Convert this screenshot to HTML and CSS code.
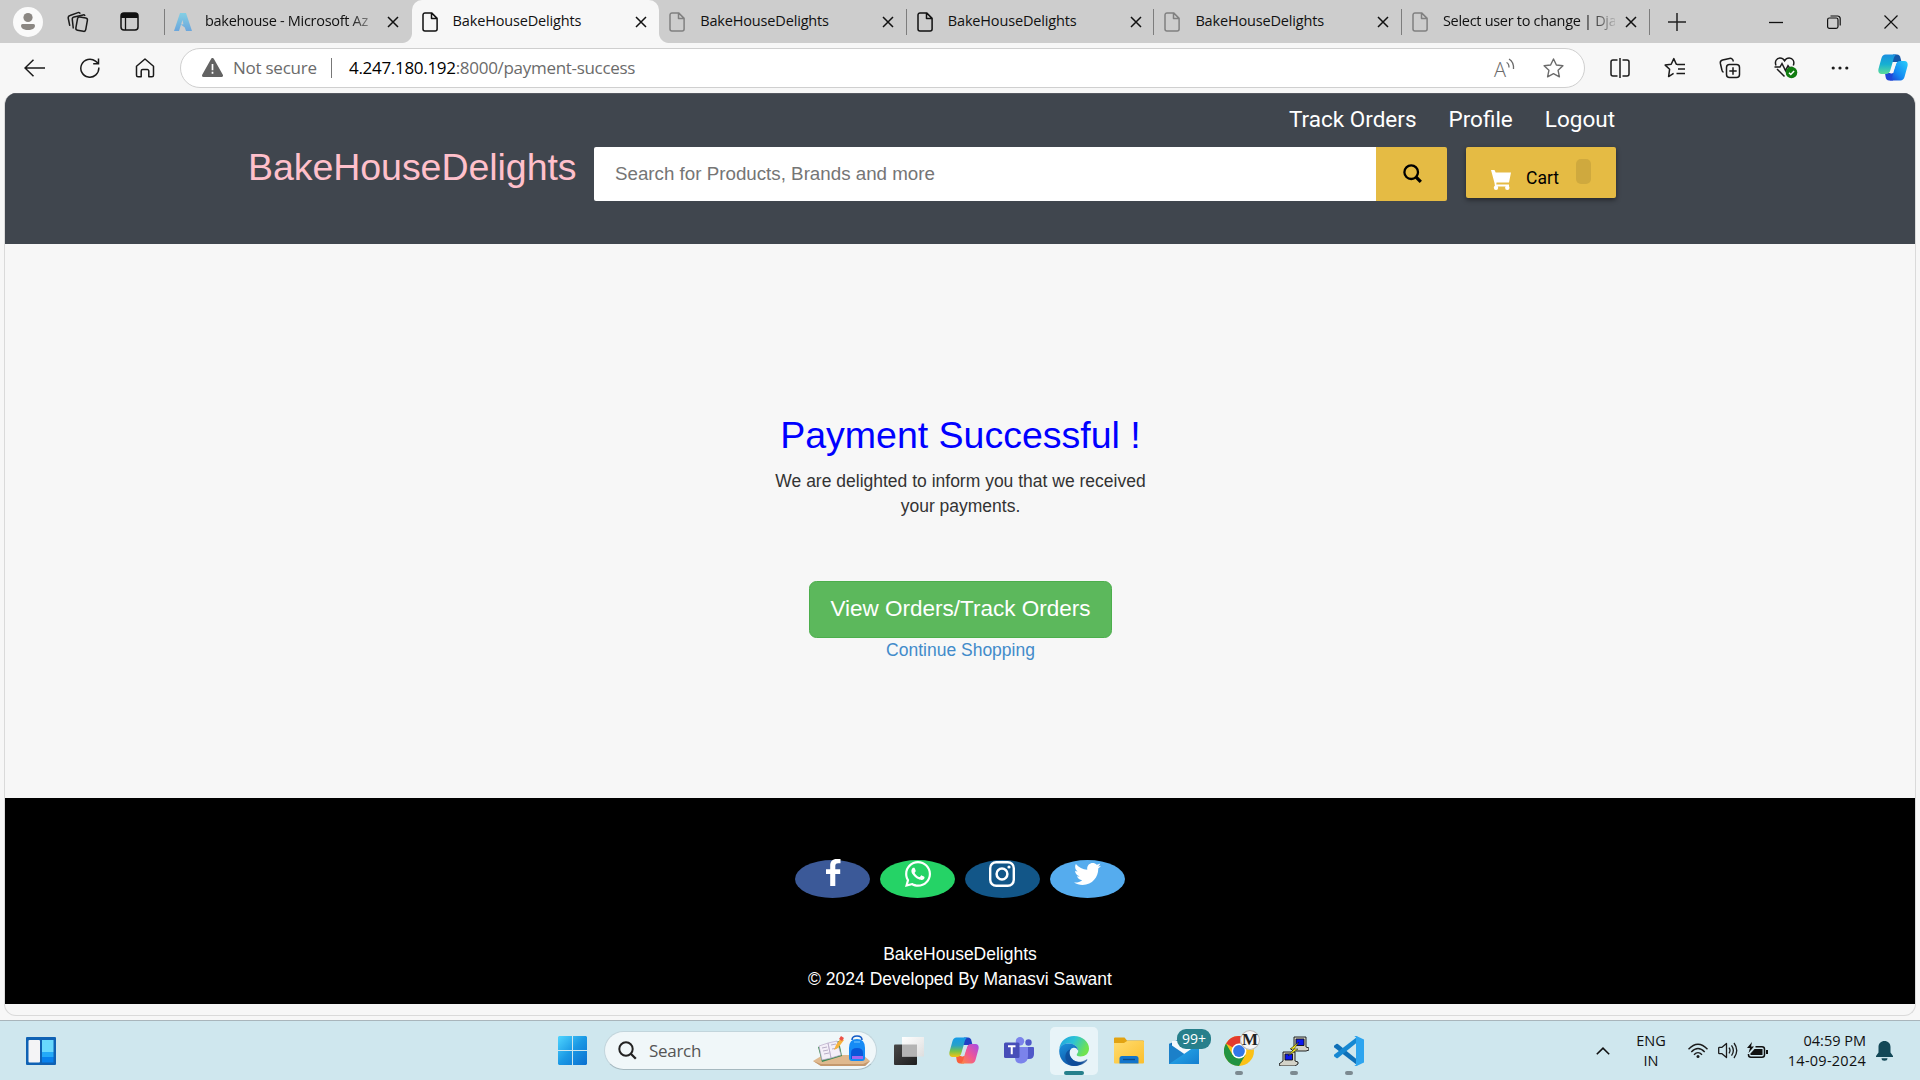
FILE: index.html
```html
<!DOCTYPE html>
<html lang="en">
<head>
<meta charset="utf-8">
<title>BakeHouseDelights</title>
<link rel="stylesheet" href="styles.css">
</head>
<body>
<svg class="defs" width="0" height="0" aria-hidden="true">
  <defs>
    <symbol id="page" viewBox="0 0 16 20"><path d="M3 .9h6.6L15.1 6.400v10.700a2 2 0 0 1-2 2H3a2 2 0 0 1-2-2V2.900a2 2 0 0 1 2-2zM9.500 1v5.500h5.500" fill="none" stroke="currentColor" stroke-width="1.5" stroke-linejoin="round"/></symbol>
    <symbol id="x" viewBox="0 0 12 12"><path d="M1 1l10 10M11 1L1 11" stroke="currentColor" stroke-width="1.5" fill="none"/></symbol>
    <linearGradient id="az" x1="0" y1="0" x2="0" y2="1"><stop offset="0" stop-color="#83cfe4"/><stop offset="1" stop-color="#6ba6dc"/></linearGradient>
    <linearGradient id="cpA" x1="0" y1="0" x2="0" y2="1"><stop offset="0" stop-color="#1a8fe0"/><stop offset=".5" stop-color="#16b0d2"/><stop offset="1" stop-color="#5ddc9a"/></linearGradient>
    <linearGradient id="cpB" x1="1" y1="0" x2="0" y2="1"><stop offset="0" stop-color="#2ad0fb"/><stop offset=".6" stop-color="#1488f2"/><stop offset="1" stop-color="#2139cf"/></linearGradient>
    <linearGradient id="cpC" x1="0" y1="0" x2="0" y2="1"><stop offset="0" stop-color="#149be8"/><stop offset=".4" stop-color="#28a1c8"/><stop offset=".7" stop-color="#75c34a"/><stop offset="1" stop-color="#f5c414"/></linearGradient>
    <linearGradient id="cpD" x1="1" y1="0" x2="0" y2="1"><stop offset="0" stop-color="#a34be8"/><stop offset=".5" stop-color="#ee5699"/><stop offset="1" stop-color="#ff8a3c"/></linearGradient>
    <linearGradient id="win" x1="0" y1="0" x2="1" y2="1"><stop offset="0" stop-color="#4fd5ff"/><stop offset=".5" stop-color="#1a98e4"/><stop offset="1" stop-color="#0a6fd0"/></linearGradient>
    <linearGradient id="dk" x1="0" y1="0" x2="1" y2="1"><stop offset="0" stop-color="#484848"/><stop offset="1" stop-color="#1e1e1e"/></linearGradient>
    <linearGradient id="lt" x1="0" y1="0" x2="1" y2="1"><stop offset="0" stop-color="#fff"/><stop offset="1" stop-color="#dedede"/></linearGradient>
    <linearGradient id="edA" x1="0" y1="0" x2="1" y2=".4"><stop offset="0" stop-color="#1f9fe0"/><stop offset=".5" stop-color="#2cc3d6"/><stop offset="1" stop-color="#70e34f"/></linearGradient>
    <linearGradient id="edB" x1="0" y1="0" x2=".6" y2="1"><stop offset="0" stop-color="#1c93dd"/><stop offset="1" stop-color="#0c4fa2"/></linearGradient>
    <linearGradient id="fo" x1="0" y1="0" x2="1" y2="1"><stop offset="0" stop-color="#ffdc70"/><stop offset="1" stop-color="#fcbf2c"/></linearGradient>
    <linearGradient id="ml" x1="0" y1="0" x2="1" y2="1"><stop offset="0" stop-color="#2bb4f0"/><stop offset="1" stop-color="#147fd0"/></linearGradient>
  </defs>
</svg>

<header class="tabstrip">
  <div class="strip-tools">
    <svg class="profile" width="30" height="30" viewBox="0 0 30 30"><circle cx="15" cy="15" r="15" fill="#fafafa"/><circle cx="15" cy="10.500" r="4.600" fill="#8b8783"/><path d="M9.500 17h11a1.500 1.500 0 0 1 1.500 1.500c0 3-3 4.500-7 4.500s-7-1.500-7-4.500A1.500 1.500 0 0 1 9.500 17z" fill="#8b8783"/></svg>
    <svg class="workspaces" width="22" height="22" viewBox="0 0 22 22" fill="none" stroke="#1b1b1b" stroke-width="1.500" stroke-linejoin="round"><rect x="9.500" y="6.500" width="10" height="13.500" rx="2" transform="rotate(10 15 14)"/><path d="M6.300 17.500l-1-8.800a2.500 2.500 0 0 1 1.800-2.800l9-2a2 2 0 0 1 2 .9"/><path d="M2.800 14.800L1.300 7.500a2.500 2.500 0 0 1 1.700-3l8-2.900a2 2 0 0 1 2.300 1"/></svg>
    <svg class="actions" width="19" height="19" viewBox="0 0 19 19"><rect x="1" y="1" width="17" height="17" rx="3" fill="none" stroke="#111" stroke-width="1.500"/><path d="M1 6V3.500A2.500 2.500 0 0 1 3.500 1h12A2.500 2.500 0 0 1 18 3.500V6z" fill="#111"/><path d="M5.500 6v12" stroke="#111" stroke-width="1.300"/></svg>
  </div>
  <nav class="tabs">
    <div class="tab first"><svg class="fav" width="18" height="18" viewBox="0 0 18 18"><path d="M6 0h6l6 18h-6l-1.200-3.600-4 -3 2.600-.2L8.500 7 5 18H0z" fill="url(#az)"/></svg><span class="title fade">bakehouse - Microsoft Az</span><svg class="close"><use href="#x"/></svg></div>
    <div class="tab active"><svg class="fav page"><use href="#page"/></svg><span class="title">BakeHouseDelights</span><svg class="close"><use href="#x"/></svg></div>
    <div class="tab sep dim"><svg class="fav page"><use href="#page"/></svg><span class="title">BakeHouseDelights</span><svg class="close"><use href="#x"/></svg></div>
    <div class="tab sep"><svg class="fav page"><use href="#page"/></svg><span class="title">BakeHouseDelights</span><svg class="close"><use href="#x"/></svg></div>
    <div class="tab sep dim"><svg class="fav page"><use href="#page"/></svg><span class="title">BakeHouseDelights</span><svg class="close"><use href="#x"/></svg></div>
    <div class="tab sep dim"><svg class="fav page"><use href="#page"/></svg><span class="title fade">Select user to change | Dja</span><svg class="close"><use href="#x"/></svg></div>
  </nav>
  <svg class="newtab" width="18" height="18" viewBox="0 0 18 18"><path d="M9 0v18M0 9h18" stroke="#222" stroke-width="1.500"/></svg>
  <div class="winctl">
    <svg width="14" height="14" viewBox="0 0 14 14"><path d="M0 7.500h14" stroke="#111" stroke-width="1.300"/></svg>
    <svg width="14" height="14" viewBox="0 0 14 14" fill="none" stroke="#111" stroke-width="1.200"><rect x=".6" y="3" width="10.400" height="10.400" rx="1.800"/><path d="M3.500 1h7A2.600 2.600 0 0 1 13.200 3.600v7"/></svg>
    <svg width="14" height="14" viewBox="0 0 14 14"><path d="M.5.5l13 13M13.500.5l-13 13" stroke="#111" stroke-width="1.200"/></svg>
  </div>
</header>

<div class="toolbar">
  <div class="navbtns">
    <svg width="21" height="18" viewBox="0 0 21 18" fill="none" stroke="#1b1b1b" stroke-width="1.500"><path d="M9.500.7L1 9l8.500 8.300M1 9h20"/></svg>
    <svg width="20" height="20" viewBox="0 0 20 20" fill="none" stroke="#1b1b1b" stroke-width="1.500"><path d="M18.800 9.500A9 9 0 1 1 15.500 3.200L18.400 5.500M18.500.5v5.300h-5.300"/></svg>
    <svg width="20" height="20" viewBox="0 0 20 20" fill="none" stroke="#1b1b1b" stroke-width="1.500" stroke-linejoin="round"><path d="M1.500 8.300L10 1l8.500 7.300v8.900a1.500 1.500 0 0 1-1.500 1.500h-3.200v-5.700a1.500 1.500 0 0 0-1.500-1.500H7.700a1.500 1.500 0 0 0-1.500 1.500v5.700H3a1.500 1.500 0 0 1-1.500-1.500z"/></svg>
  </div>
  <div class="urlbar">
    <svg class="warn" width="21" height="19" viewBox="0 0 21 19"><path d="M10.500 1.500L19.500 17.500H1.500z" fill="#636363" stroke="#636363" stroke-width="3" stroke-linejoin="round"/><path d="M10.500 6v6.300M10.500 13.800v2" stroke="#fff" stroke-width="1.700"/></svg>
    <span class="notsecure">Not secure</span>
    <span class="bar"></span>
    <span class="url"><b>4.247.180.192</b>:8000/payment-success</span>
    <span class="read"><i>A</i><svg width="9" height="12" viewBox="0 0 9 12" fill="none" stroke="#6b6b6b" stroke-width="1.300"><path d="M.5 4.500Q3 5.500 3 9.500M3 1Q8 4 7.500 11"/></svg></span>
    <svg class="star" width="21" height="20" viewBox="0 0 21 20" fill="none" stroke="#6b6b6b" stroke-width="1.400" stroke-linejoin="round"><path d="M10.500 1l2.900 6 6.500.8-4.800 4.500 1.300 6.500-5.900-3.200-5.900 3.200 1.300-6.500L1.100 7.800l6.500-.8z"/></svg>
  </div>
  <div class="toolicons">
    <svg width="22" height="22" viewBox="0 0 22 22" fill="none" stroke="#1b1b1b" stroke-width="1.500"><path d="M8.500 3H4a2 2 0 0 0-2 2v12a2 2 0 0 0 2 2h4.500M13.500 3H18a2 2 0 0 1 2 2v12a2 2 0 0 1-2 2h-4.500M11 1v20"/></svg>
    <svg width="22" height="22" viewBox="0 0 22 22" fill="none" stroke="#1b1b1b" stroke-width="1.500" stroke-linejoin="round"><path d="M13 7.300h-.7L9.800 1.600 7.200 7.300l-6 .8 4.400 4.200-1 7.300 5-3.200M13 7.500h8M14 12h7M12.500 16.500H21"/></svg>
    <svg width="22" height="22" viewBox="0 0 22 22" fill="none" stroke="#1b1b1b" stroke-width="1.500"><rect x="7.500" y="7.500" width="13" height="13" rx="3"/><path d="M14 10.300v7.400M10.300 14h7.400M4.500 15.300A3 3 0 0 1 2.900 13L1.400 6.500A3 3 0 0 1 3.600 3L10.500 1.400A3 3 0 0 1 14.200 4.500"/></svg>
    <svg width="24" height="23" viewBox="0 0 24 23" fill="none" stroke="#1b1b1b" stroke-width="1.500"><path d="M2 9.500C.4 5.500 2.500 2 6 2c2.200 0 3.700 1.300 4.600 2.800C11.500 3.300 13 2 15.200 2c3.600 0 5.700 3.500 4.100 7.500M3 13l7.500 7.500M.5 11H6l2-3.500 3.500 7L14 9.800l1.200 1.700h3.500"/><circle cx="17.500" cy="16.500" r="5.800" fill="#107c10" stroke="none"/><path d="M15 16.700l1.800 1.800 3.300-3.500" stroke="#fff"/></svg>
    <svg width="18" height="4" viewBox="0 0 18 4" fill="#1b1b1b"><circle cx="2.200" cy="2" r="1.600"/><circle cx="9" cy="2" r="1.600"/><circle cx="15.800" cy="2" r="1.600"/></svg>
    <svg class="copilot" width="30" height="27" viewBox="0 0 30 27"><path d="M15 .5h4c2 0 3 1.500 3.500 3.500L23.500 8H14z" fill="#1557a8"/><path d="M15 26.500h-4c-2 0-3-1.500-3.400-3.500L7 19h9z" fill="#2047d8"/><path d="M7.500.5H18.500c-2.200 1-2.700 3.500-3.500 6.500l-2.600 9c-.7 2.500-2 4-5 4H3.500C.7 20-.2 17.500.6 14.500L3.500 4C4.200 1.800 5.500.5 7.500.5z" fill="url(#cpA)"/><path d="M22.500 26.500H11.500c2.200-1 2.700-3.500 3.500-6.500l2.600-9c.7-2.500 2-4 5-4h3.900c2.800 0 3.700 2.500 2.900 5.500L26.500 23c-.7 2.200-2 3.500-4 3.500z" fill="url(#cpB)"/><path d="M16.800 8h2L14.300 19.500h-2z" fill="#f7f7f7"/></svg>
  </div>
</div>

<main class="viewport">
  <section class="site-header">
    <div class="container">
      <nav class="links"><a>Track Orders</a><a>Profile</a><a>Logout</a></nav>
      <div class="row">
        <h1 class="logo">BakeHouseDelights</h1>
        <div class="search"><div class="field"><span>Search for Products, Brands and more</span></div>
          <div class="go"><svg width="19" height="20" viewBox="0 0 19 20" fill="none" stroke="#000"><circle cx="8.200" cy="8.200" r="6.800" stroke-width="2.300"/><path d="M13 13l4.800 4.800" stroke-width="3.200"/></svg></div></div>
        <div class="cart"><svg width="20" height="20" viewBox="0 0 20 20" fill="#fff"><path d="M0 0h3.500l1.200 2.500H20L18 12.500H5.500L5.300 14.500H18v2H4L3.500 13z"/><circle cx="5" cy="17.700" r="2.200"/><circle cx="16.300" cy="17.700" r="2.200"/></svg><span>Cart</span><i class="badge"></i></div>
      </div>
    </div>
  </section>
  <section class="message">
    <h2>Payment Successful !</h2>
    <p><span>We are delighted to inform you that we received</span><br><span>your payments.</span></p>
    <a class="btn"><span>View Orders/Track Orders</span></a>
    <a class="continue">Continue Shopping</a>
  </section>
  <footer class="site-footer">
    <div class="social">
      <a class="fb"><svg width="15" height="27" viewBox="0 0 15 27"><path d="M4.200 27V15H0v-4.800h4.200V6.500C4.200 2.300 6.700 0 10.500 0H14.500v4.300h-2.300C10 4.300 9.300 5.600 9.300 7v3.200h4.900V15H9.300v12z" fill="#fff"/></svg></a>
      <a class="wa"><svg width="26" height="26" viewBox="0 0 448 448"><path fill="#fff" d="M380.900 65.100C339 23.100 283.200 0 223.900 0 101.500 0 1.900 99.600 1.900 222c0 39.100 10.200 77.300 29.600 111L0 448l117.700-30.900c32.400 17.700 68.900 27 106.100 27h.1c122.300 0 224.100-99.600 224.100-222 0-59.300-25.200-115-67.100-157zM223.900 406.700c-33.200 0-65.700-8.900-94-25.700l-6.700-4-69.800 18.300L72 327.200l-4.400-7c-18.500-29.400-28.200-63.300-28.200-98.200 0-101.700 82.800-184.500 184.600-184.500 49.300 0 95.600 19.200 130.400 54.100s56.200 81.200 56.100 130.500c0 101.800-84.900 184.600-186.600 184.600z"/><path d="M325 268c-5-3-33-17-38-19s-9-3-13 3-14 18-18 22-7 4-12 1c-33-16-54-29-76-66-6-10 6-9 16-31 2-4 1-7 0-10s-12-30-17-41c-4-11-9-9-12-9h-11c-4 0-10 1-15 7s-19 19-19 46 20 54 23 57c3 4 39 60 95 84 35 15 49 16 67 14 11-2 33-13 37-26 5-13 5-24 3-26s-5-3-10-6z" fill="#fff"/></svg></a>
      <a class="ig"><svg width="26" height="26" viewBox="0 0 26 26" fill="none" stroke="#fff"><rect x="1.200" y="1.200" width="23.600" height="23.600" rx="6" stroke-width="2.400"/><circle cx="13" cy="13" r="5.400" stroke-width="2.500"/><circle cx="20" cy="6" r="1.600" fill="#fff" stroke="none"/></svg></a>
      <a class="tw"><svg width="27" height="22" viewBox="0 48 512 416"><path fill="#fff" d="M459.400 151.700c.3 4.500.3 9.100.3 13.600 0 138.700-105.600 298.600-298.600 298.600-59.500 0-114.700-17.200-161.100-47.100 8.400 1 16.600 1.300 25.300 1.300 49.100 0 94.200-16.600 130.300-44.800-46.100-1-84.800-31.200-98.100-72.800 6.500 1 13 1.600 19.800 1.600 9.400 0 18.800-1.300 27.600-3.600-48.100-9.700-84.100-52-84.100-103v-1.300c14 7.800 30.200 12.700 47.400 13.300-28.300-18.800-46.800-51-46.800-87.400 0-19.500 5.200-37.400 14.300-53 51.700 63.700 129.300 105.300 216.400 109.800-1.600-7.800-2.600-15.900-2.600-24 0-57.800 46.800-104.900 104.900-104.900 30.200 0 57.500 12.700 76.700 33.100 23.700-4.500 46.500-13.300 66.600-25.300-7.800 24.400-24.400 44.800-46.100 57.800 21.100-2.300 41.600-8.100 60.400-16.200-14.300 20.800-32.200 39.300-52.600 54.300z"/></svg></a>
    </div>
    <p><span>BakeHouseDelights</span><br><span>© 2024 Developed By Manasvi Sawant</span></p>
  </footer>
</main>

<div class="taskbar">
  <svg class="widgets" width="30" height="28" viewBox="0 0 30 28"><rect width="30" height="28" rx="1" fill="#0f62b4"/><rect x="2.500" y="3" width="11.500" height="22.500" rx="1" fill="#f4f4f6"/><path d="M16 3h11.500v12H16z" fill="#68d8fd"/><path d="M16 15h11.500v5H16z" fill="#24aaf8"/><path d="M16 20h11.500v5.500H16z" fill="#0881ec"/></svg>
  <div class="center">
    <svg class="start" width="29" height="29" viewBox="0 0 29 29" fill="url(#win)"><path d="M1 0h13v14H0V1zM15 0h13l1 1v13H15zM0 15h14v14H1l-1-1zM15 15h14v13l-1 1H15z"/></svg>
    <div class="searchbox">
      <svg width="19" height="19" viewBox="0 0 19 19" fill="none" stroke="#222"><circle cx="8" cy="8" r="6.700" stroke-width="2"/><path d="M12.800 12.800l5 5" stroke-width="2.300"/></svg>
      <span>Search</span>
      <svg class="art" width="57" height="32" viewBox="0 0 57 32"><path d="M0 26L10 20H50L57 26 52 31H8z" fill="#dfb98f"/><path d="M0 26L8 29H50L57 26 52 31H8z" fill="#c4986d"/><path d="M5 12L26 6l3 15-20 6z" fill="#3c8a51"/><path d="M6 11l9-3 3 15-9 2zM15 8l9-2 4 14-10 3z" fill="#f3eff8" stroke="#b8abc8" stroke-width=".7"/><path d="M9 13l5-1M10 16l5-1M11 19l5-1M18 10l5-1M19 14l5-1" stroke="#a99fba" stroke-width=".8"/><path d="M21 15l2-5 5-7 3 2-6 8z" fill="#f6b23d"/><path d="M26 4l2-3 3 2-2 3z" fill="#ed5146"/><path d="M39 5q0-4 5-4t5 4" stroke="#1259c5" stroke-width="1.600" fill="none"/><path d="M36 13q0-9 8-9t8 9v10q0 3-3 3H39q-3 0-3-3z" fill="#168bf5"/><path d="M38 18q0-5 6-5t6 5v6H38z" fill="#0a57d9"/><path d="M39 21h11v3H39z" fill="#a267ed"/><path d="M41 7h6" stroke="#7bc9ff"/></svg>
    </div>
    <div class="app"><svg width="30" height="28" viewBox="0 0 30 28"><path d="M1 7.500h22v19.500q0 1-1 1H1q-1 0-1-1V8.500q0-1 1-1z" fill="url(#dk)"/><path d="M8 0h22v19.500H8z" fill="url(#lt)"/><path d="M8 7.500h15v12H8z" fill="#b4b4b4"/></svg></div>
    <div class="app"><svg width="30" height="27" viewBox="0 0 30 27"><path d="M15 .5h4c2 0 3 1.500 3.500 3.500L23.500 8H14z" fill="#1f3fc4"/><path d="M15 26.500h-4c-2 0-3-1.500-3.400-3.500L7 19h9z" fill="#f8603c"/><path d="M7.500.5H18.500c-2.200 1-2.700 3.500-3.500 6.500l-2.600 9c-.7 2.500-2 4-5 4H3.500C.7 20-.2 17.500.6 14.500L3.500 4C4.200 1.800 5.500.5 7.500.5z" fill="url(#cpC)"/><path d="M22.500 26.500H11.500c2.200-1 2.700-3.500 3.500-6.500l2.600-9c.7-2.500 2-4 5-4h3.900c2.800 0 3.700 2.500 2.900 5.500L26.500 23c-.7 2.200-2 3.500-4 3.500z" fill="url(#cpD)"/><path d="M16.800 8h2L14.300 19.500h-2z" fill="#cfe7ee"/></svg></div>
    <div class="app"><svg width="30" height="27" viewBox="0 0 30 27"><circle cx="24.500" cy="5.500" r="3.200" fill="#5059c9"/><path d="M20 10h9q1 0 1 1v6q0 5-5 5h-5z" fill="#5059c9"/><circle cx="16" cy="4.200" r="4.200" fill="#7b83eb"/><path d="M11 10h13v9q0 7-6.500 7.500T11 20z" fill="#7b83eb"/><rect y="5.500" width="15.500" height="15.500" rx="1.500" fill="#474eb8"/><path d="M4 9.300h7.500M7.750 9.300v8" stroke="#fff" stroke-width="2"/></svg></div>
    <div class="app current"><svg width="30" height="30" viewBox="0 0 30 30"><path d="M.3 13C1 5.500 7 0 15 0c8.500 0 15 6 15 12.500 0 5-3.700 8-8.500 8-3.200 0-4.500-1.200-3.500-2.500 1-1.400 1.200-2 1.200-3.200C19 10 14 7.500 9.500 7.500 5 7.500 1.500 10 .3 13z" fill="url(#edA)"/><path d="M.2 15C.2 10 4.500 7.500 9.500 7.500c5 0 9.500 2.700 9.700 7.300-1-2.300-2.700-3.300-4.700-3C10 12.500 9.500 18 12.500 22s8.500 5.300 13 3.700C22.500 28.500 19 30 15 30 6.500 30 .2 23.500.2 15z" fill="url(#edB)"/><path d="M12 13C9.500 15.500 10.300 20 13 23c3.500 3.700 9.500 3.500 14.500.4.600-.4 1.100.2.700.8C26 27.500 21 30 15 30 9 29 5.500 24 6.500 19c.6-3 2.500-5 5.500-6z" fill="#0d4a96" opacity=".75"/></svg></div>
    <div class="app"><svg width="30" height="27" viewBox="0 0 30 27"><path d="M1 .5h9.500l2.500 3h16q1 0 1 1V10H0V1.500q0-1 1-1z" fill="#e2a312"/><path d="M0 6h10l3-2h16q1 0 1 1v20.500q0 1-1 1H1q-1 0-1-1z" fill="url(#fo)"/><path d="M5.500 26.500V21.500q0-2.500 2.500-2.500h14q2.500 0 2.500 2.500v5z" fill="#1375cb"/><path d="M9 22.500h12" stroke="#0d4b87" stroke-width="1.300"/></svg></div>
    <div class="app mail"><svg width="30" height="27" viewBox="0 0 30 27"><path d="M0 7L15 0l15 7v20H0z" fill="#176fb6"/><path d="M3 4h24v10L15 21 3 14z" fill="#f5f9fc"/><path d="M0 6.500L30 27H0z" fill="#1b80c9"/><path d="M30 6.500L15 17 0 27h30z" fill="url(#ml)"/></svg><span class="count">99+</span></div>
    <div class="app run"><svg width="30" height="30" viewBox="0 0 30 30"><circle cx="15" cy="15" r="15" fill="#fbc116"/><path d="M15 15L2 7.500A15 15 0 0 1 28 7.500H15z" fill="#e33b2e"/><path d="M2 7.500A15 15 0 0 0 15 30l6.500-11.200L15 15 8.500 18.700z" fill="#229342"/><circle cx="15" cy="15" r="7.400" fill="#fff"/><circle cx="15" cy="15" r="5.900" fill="#3277e8"/></svg><span class="m">M</span></div>
    <div class="app run"><svg width="30" height="30" viewBox="0 0 30 30" stroke="#111" stroke-width=".9"><path d="M15 1h12v10l3 1v2l-3 1H14l-2-2 3-3z" fill="#d3d3c8"/><path d="M17 3h8v6.500h-8z" fill="#0b18ee"/><path d="M4 16h12v9l3 1v2l-3 2H1l-1-2 4-3z" fill="#d3d3c8"/><path d="M6 18h7.500v6H6z" fill="#0b18ee"/><path d="M20 6l-9 7h4l-6 7 10-7h-4z" fill="#fbf01c" stroke-width=".5"/></svg></div>
    <div class="app run"><svg width="30" height="30" viewBox="0 0 30 30"><path d="M0 9.800L2.300 8q.8-.5 1.600.1L23 23.500V29L.3 11.500q-.9-.8-.3-1.700z" fill="#0f70b8"/><path d="M0 20.200L2.300 22q.8.500 1.600-.1L23 6.500V1L.3 18.500q-.9.800-.3 1.700z" fill="#1688d2"/><path d="M22.500 0L30 3.500v23L22.500 30q-1.500.2-2-1 2.500.5 2.500-1.500v-25Q23 .5 20.500 1q.5-1.200 2-1z" fill="#2ea5ef"/><path d="M22 0.500h1.200v29H22z" fill="#2ea5ef"/></svg></div>
  </div>
  <div class="tray">
    <svg class="chev" width="14" height="8" viewBox="0 0 14 8"><path d="M.8 7.300L7 1.200l6.200 6.100" fill="none" stroke="#111" stroke-width="1.600"/></svg>
    <div class="lang"><span>ENG</span><br>IN</div>
    <svg class="wifi" width="20" height="16" viewBox="0 0 20 16" fill="none" stroke="#1b1b1b" stroke-width="1.400"><path d="M.5 6.200Q10-3.800 19.500 6.200M3.300 9Q10 2 16.700 9M6 11.700Q10 7.500 14 11.700"/><circle cx="10" cy="13.500" r="1.500" fill="#1b1b1b" stroke="none"/></svg>
    <svg class="vol" width="20" height="17" viewBox="0 0 20 17" fill="none" stroke="#1b1b1b" stroke-width="1.300" stroke-linejoin="round"><path d="M.7 6v5q0 .7.7.7H4l4.500 3.800V1.500L4 5.300H1.400Q.7 5.300.7 6zM11 5.700q2 2.800 0 5.600M13.500 3.300q3.700 5.200 0 10.400M16 1q5.500 7.500 0 15"/></svg>
    <svg class="bat" width="21" height="17" viewBox="0 0 21 17"><path d="M8.500 4.700H15a2.500 2.500 0 0 1 2.500 2.500v5.600a2.500 2.500 0 0 1-2.500 2.500H4a2.500 2.500 0 0 1-2.500-2.500V12" fill="none" stroke="#111" stroke-width="1.500"/><path d="M7.500 7h8v6H3.500v-1.500z" fill="#111"/><path d="M19 8h2v4h-2z" fill="#111"/><path d="M5 0L0 6h3L1.500 11 7 4.500H4z" fill="#111"/></svg>
    <div class="clock"><span>04:59 PM</span><br><span class="date">14-09-2024</span></div>
    <svg class="bell" width="17" height="20" viewBox="0 0 17 20" fill="#134857"><path d="M8.500 0C12 0 14.500 2.500 14.500 6v5.500L17 15v1H0v-1l2.500-3.500V6C2.500 2.500 5 0 8.500 0zM5.500 17.300h6a3 2.500 0 0 1-6 0z"/></svg>
  </div>
</div>
</body>
</html>
```
FILE: styles.css
```css
* { box-sizing: border-box; }
html, body { margin: 0; height: 100%; overflow: hidden; }
body {
  width: 1920px; height: 1080px;
  display: flex; flex-direction: column;
  background: #f7f7f7;
  font-family: "Liberation Sans", Arial, sans-serif;
}
svg { display: block; flex: none; }
.defs { position: absolute; }
h1, h2, p { margin: 0; font-weight: 400; }

/* tab strip */
.tabstrip { height: 43px; flex: none; background: #cdcdcd; display: flex; align-items: center; font-family: "Open Sans", "Noto Sans", sans-serif; }
.strip-tools { width: 164px; display: flex; align-items: center; padding-left: 13px; }
.workspaces { margin-left: 24px; }
.actions { margin-left: 31px; }
.tabs { display: flex; height: 43px; }
.tab { position: relative; width: 247.6px; display: flex; align-items: center; padding-left: 10px; color: #111; }
.tab .fav { width: 18px; height: 20px; }
.tab .fav.page { width: 16px; margin-right: 2px; }
.dim .fav { color: #808080; }
.tab .title { margin-left: 13px; width: 172px; white-space: nowrap; font-size: 14.5px; letter-spacing: -.16px; line-height: 20px; margin-bottom: 2px; }
.tab .title.fade { letter-spacing: -.3px; -webkit-mask-image: linear-gradient(90deg, #000 145px, transparent 176px); mask-image: linear-gradient(90deg, #000 145px, transparent 176px); }
.tab .close { width: 12px; height: 12px; margin-left: 10px; margin-top: 1px; }
.first::before, .sep::after { content: ""; position: absolute; top: 9px; height: 26px; width: 1px; background: #7d7d7d; }
.first::before { left: 0; }
.sep::after { right: 0; }
.active { background: #f7f7f7; border-radius: 10px 10px 0 0; }
.active::before, .active::after { content: ""; position: absolute; bottom: 0; width: 10px; height: 10px; }
.active::before { left: -10px; background: radial-gradient(circle at 0 0, transparent 9.5px, #f7f7f7 10.5px); }
.active::after { right: -10px; background: radial-gradient(circle at 100% 0, transparent 9.5px, #f7f7f7 10.5px); }
.newtab { margin-left: 18px; }
.winctl { margin-left: auto; margin-right: 22px; display: flex; gap: 43.5px; }

/* toolbar */
.toolbar { height: 50px; flex: none; display: flex; align-items: center; padding-bottom: 1px; font-family: "Open Sans", "Noto Sans", sans-serif; }
.navbtns { width: 180px; padding-left: 24px; display: flex; align-items: center; gap: 35px; }
.urlbar { width: 1405px; height: 40px; background: #fff; border: 1px solid #cfcfcf; border-radius: 20px; display: flex; align-items: center; padding-left: 21px; color: #6b6b6b; font-size: 17px; white-space: nowrap; }
.notsecure { margin-left: 10px; width: 84px; letter-spacing: -.25px; }
.bar { width: 1px; height: 20px; background: #777; margin-left: 14px; }
.url { margin-left: 17px; letter-spacing: -.3px; }
.url b { font-weight: 400; color: #000; }
.read { margin-left: auto; display: flex; align-items: flex-start; width: 49px; height: 20px; }
.read i { font-style: normal; font-size: 20px; line-height: 24px; font-weight: 300; }
.star { margin-right: 20px; }
.toolicons { flex: 1; display: flex; align-items: center; gap: 33px; padding-left: 24px; }
.copilot { margin-left: -4px; }

/* page */
.viewport { margin: 0 4px; height: 923px; flex: none; border: 1px solid #dadada; border-top: 0; border-radius: 12px; overflow: hidden; background: #f7f7f7; display: flex; flex-direction: column; }
.site-header { height: 151px; background: #40464e; border-top: 1px solid #565961; }
.container { width: 1368px; margin-left: 243px; }
.links { height: 53px; padding-right: 1px; display: flex; justify-content: flex-end; gap: 32px; font: 22.5px/50px Roboto, sans-serif; color: #fff; }
.row { display: flex; align-items: flex-start; }
.logo { width: 346px; height: 54px; font-size: 37.5px; letter-spacing: -.05px; line-height: 40px; color: #ffc0cb; white-space: nowrap; }
.search { width: 853px; height: 54px; display: flex; border-radius: 2px; overflow: hidden; }
.field { flex: 1; background: #fff; padding-left: 21px; font-size: 18.75px; line-height: 53px; color: #757575; }
.go { width: 71px; padding-left: 1px; background: #e5bb44; display: flex; align-items: center; justify-content: center; }
.cart { width: 150px; height: 51px; margin-left: 19px; background: #e5bb44; border-radius: 2px; box-shadow: 0 2px 5px rgba(0,0,0,.45); display: flex; align-items: flex-start; padding-left: 25px; font: 17.5px/24px Roboto, sans-serif; }
.cart svg { margin-top: 23px; }
.cart span { margin: 19px 0 0 15px; width: 35px; }
.badge { margin: 12px 0 0 15px; width: 15px; height: 25px; border-radius: 5px; background: #cfa93e; }
.message { height: 554px; padding: 169px 0 0 1px; display: flex; flex-direction: column; align-items: center; text-align: center; color: #333; font-size: 17.5px; line-height: 25px; }
.message h2 { font-size: 37.5px; line-height: 44px; color: #00f; }
.message p { margin-top: 12px; white-space: nowrap; }
.btn { margin-top: 62px; width: 303px; height: 57px; background: #5cb85c; border: 1px solid #4cae4c; border-radius: 7.5px; color: #fff; font-size: 22.5px; line-height: 54px; }
.continue { color: #428bca; }
.site-footer { height: 206px; background: #000; color: #fff; text-align: center; padding-top: 62px; font-size: 17.5px; line-height: 25px; }
.social { display: flex; justify-content: center; gap: 10px; }
.social a { width: 75px; height: 38px; border-radius: 50%; display: flex; justify-content: center; align-items: flex-start; }
.fb { background: #3b5998; padding-left: 2px; }
.wa { background: #25d366; }
.ig { background: #125688; padding-right: 1px; }
.tw { background: #55acee; }
.fb svg { margin-top: -1px; }
.wa svg, .ig svg { margin-top: 1px; }
.tw svg { margin-top: 3px; }
.site-footer p { margin-top: 44px; }

/* taskbar */
.taskbar { margin-top: 4px; height: 60px; flex: none; border-top: 1px solid #a9b5bb; background: #cfe7ee; display: flex; align-items: center; color: #111; font-family: "Open Sans", "Noto Sans", sans-serif; }
.widgets { margin-left: 26px; }
.center { margin-left: 502px; display: flex; align-items: center; }
.searchbox { margin-left: 17px; margin-right: 8px; width: 273px; height: 39px; border-radius: 20px; background: #f0f7f9; border: 1px solid #c2d5dc; border-bottom-color: #a6b9c0; display: flex; align-items: center; padding-left: 13px; font-size: 17px; color: #555; }
.searchbox span { margin-left: 12px; letter-spacing: -.3px; }
.art { margin-left: auto; margin-right: 6px; }
.app { position: relative; width: 48px; height: 48px; margin-right: 7px; display: flex; align-items: center; justify-content: center; border-radius: 5px; }
.current { background: #e8f4f8; }
.current::after, .run::after { content: ""; position: absolute; left: 14px; bottom: 0; width: 20px; height: 4px; border-radius: 2px; background: #26808c; }
.run::after { left: 20px; width: 8px; background: #7c8a90; }
.count { position: absolute; left: 17px; top: 2px; width: 34px; height: 20px; border-radius: 9px; background: #277f8b; color: #fff; font-size: 14px; line-height: 20px; text-align: center; }
.m { position: absolute; left: 25px; top: 3px; width: 20px; height: 20px; border-radius: 50%; background: #f5f5f5; box-shadow: inset 0 0 0 1px #b9b9b9; color: #222; font: bold 17px/20px "Liberation Serif", serif; text-align: center; }
.tray { margin-left: auto; display: flex; align-items: center; font-size: 14.5px; line-height: 20px; white-space: nowrap; }
.lang { margin-left: 26px; width: 30px; text-align: center; }
.wifi { margin-left: 22px; }
.vol { margin-left: 10px; }
.bat { margin-left: 9px; }
.clock { margin-left: 18px; width: 80px; text-align: right; }
.date { letter-spacing: .25px; }
.bell { margin: 1px 27px 0 10px; }
```
